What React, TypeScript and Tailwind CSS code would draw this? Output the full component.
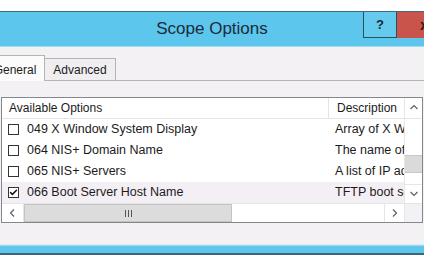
import { Check } from 'lucide-react';

type OptionRow = { code: string; name: string; description: string; checked?: boolean; hot?: boolean };

const rows: OptionRow[] = [
  { code: '049', name: 'X Window System Display', description: 'Array of X Window System display servers' },
  { code: '064', name: 'NIS+ Domain Name', description: 'The name of the client NIS+ domain' },
  { code: '065', name: 'NIS+ Servers', description: 'A list of IP addresses indicating NIS+ servers' },
  { code: '066', name: 'Boot Server Host Name', description: 'TFTP boot server host name', checked: true, hot: true },
];

function Chevron({ dir }: { dir: 'up' | 'down' | 'left' | 'right' }) {
  const points = {
    up: '1.5,6 5,2.5 8.5,6',
    down: '1.5,3 5,6.5 8.5,3',
    left: '6,1.5 2.5,5 6,8.5',
    right: '3,1.5 6.5,5 3,8.5',
  }[dir];
  return (
    <svg width="10" height="10" viewBox="0 0 10 10">
      <polyline points={points} fill="none" stroke="#606060" strokeWidth="1.2" />
    </svg>
  );
}

export default function App() {
  return (
    <div className="h-[265px] w-[424px] overflow-hidden bg-white font-['Liberation_Sans',Arial,sans-serif] text-[#1b1b1b]">
      <div className="h-[11px]" />

      {/* title bar */}
      <div className="flex h-[36px] items-start border-t border-b border-t-[#3c6a7e] border-b-[#9fdcf2] bg-[#5cc6ec]">
        <div className="flex h-[34px] flex-1 items-center justify-center pl-[61px] text-[17px] text-[#1d2b3a]">Scope Options</div>
        <div className="flex h-[26px] w-[34px] shrink-0 items-center justify-center border border-t-0 border-[#2f4d5c] bg-[#64cbef] text-[13px] font-bold text-[#1a2633]">?</div>
        <div className="flex h-[26px] w-[27px] shrink-0 items-center overflow-hidden bg-[#c8544c] pl-[23px] text-[15px] font-bold text-[#2a1a1a]">x</div>
      </div>

      {/* body */}
      <div className="flex h-[198px] flex-col bg-[#f4f1f5]">
        <div className="mt-[9px] flex h-[25px] items-end border-b border-[#b4b4b4] text-[12px]">
          <div className="relative -mb-px -ml-[15px] flex h-[26px] w-[60px] items-center justify-center border border-b-0 border-[#b4b4b4] bg-[#fbfbfb] pt-[2px]">General</div>
          <div className="flex h-[22px] w-[71px] items-center justify-center border border-b-0 border-l-0 border-[#b4b4b4] bg-[#f0eef1]">Advanced</div>
        </div>

        {/* list view */}
        <div className="ml-[1px] mt-[16px] grid h-[126px] w-[422px] grid-cols-[402px_18px] grid-rows-[105px_19px] border border-[#828790] bg-white text-[12px]">
          <div className="overflow-hidden">
            <div className="flex h-[21px] items-center border-b border-[#e3e3e3]">
              <div className="flex h-full w-[327px] items-center border-r border-[#e3e3e3] pl-[7px]">Available Options</div>
              <div className="flex h-full flex-1 items-center whitespace-nowrap pl-[8px]">Description</div>
            </div>
            {rows.map((row) => (
              <div key={row.code} className={`flex h-[21px] items-center ${row.hot ? 'bg-[#f4eff4]' : ''}`}>
                <div className="flex w-[327px] items-center gap-[8px] pl-[6px]">
                  <div className="flex h-[11px] w-[11px] items-center justify-center border border-[#333] bg-white">
                    {row.checked && <Check className="h-[9px] w-[9px] text-[#111]" strokeWidth={4} />}
                  </div>
                  <span className="whitespace-nowrap text-[12.5px]">{row.code} {row.name}</span>
                </div>
                <div className="w-[75px] overflow-hidden whitespace-nowrap pl-[6px] text-[12.5px]">{row.description}</div>
              </div>
            ))}
          </div>

          {/* vertical scrollbar */}
          <div className="flex flex-col border-l border-[#e6e6e6] bg-white">
            <div className="flex h-[21px] items-center justify-center border-b border-[#e6e6e6]"><Chevron dir="up" /></div>
            <div className="h-[36px]" />
            <div className="h-[18px] border-y border-[#c9c9c9] bg-[#dadada]" />
            <div className="flex-1" />
            <div className="flex h-[19px] items-center justify-center border-t border-[#e6e6e6]"><Chevron dir="down" /></div>
          </div>

          {/* horizontal scrollbar */}
          <div className="flex border-t border-[#e6e6e6]">
            <div className="flex w-[22px] items-center justify-center border-r border-[#e6e6e6]"><Chevron dir="left" /></div>
            <div className="flex w-[208px] items-center justify-center gap-[2px] border border-[#c4c4c4] bg-[#dcdcdc]">
              <div className="h-[7px] w-px bg-[#555]" />
              <div className="h-[7px] w-px bg-[#555]" />
              <div className="h-[7px] w-px bg-[#555]" />
            </div>
            <div className="flex-1" />
            <div className="flex w-[20px] items-center justify-center border-l border-[#e6e6e6]"><Chevron dir="right" /></div>
          </div>
          <div className="border-l border-t border-[#e6e6e6] bg-[#f4f1f5]" />
        </div>

        <div className="flex-1 border-b border-[#dfe8ee]" />
      </div>

      {/* bottom frame */}
      <div className="h-[10px] border-t border-b-2 border-t-[#9fd9ef] border-b-[#3d6478] bg-[#5cc6ec]" />
    </div>
  );
}
